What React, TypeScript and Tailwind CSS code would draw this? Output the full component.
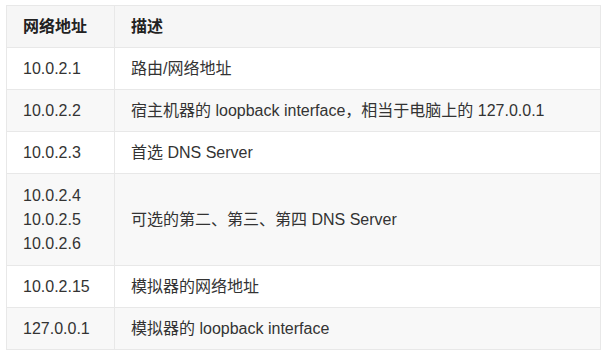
import React from "react";

const rows: { ip: string[]; desc: string }[] = [
  { ip: ["10.0.2.1"], desc: "路由/网络地址" },
  { ip: ["10.0.2.2"], desc: "宿主机器的 loopback interface，相当于电脑上的 127.0.0.1" },
  { ip: ["10.0.2.3"], desc: "首选 DNS Server" },
  { ip: ["10.0.2.4", "10.0.2.5", "10.0.2.6"], desc: "可选的第二、第三、第四 DNS Server" },
  { ip: ["10.0.2.15"], desc: "模拟器的网络地址" },
  { ip: ["127.0.0.1"], desc: "模拟器的 loopback interface" },
];

export default function App() {
  return (
    <div
      className="w-[605px] h-[355px] bg-white pt-[5px] pl-[6px] text-[16px] leading-[24px] text-[#333333]"
      style={{ fontFamily: '"Liberation Sans", Arial, "Noto Sans CJK SC", sans-serif' }}
    >
      <div className="w-[595px] grid grid-cols-[108px_486px] border-l border-t border-[#e8e8e8]">
        <div className="h-[42px] bg-[#f6f6f6] border-r border-b border-[#e8e8e8] px-4 flex items-center font-bold text-[#222]">网络地址</div>
        <div className="h-[42px] bg-[#f6f6f6] border-r border-b border-[#e8e8e8] px-4 flex items-center font-bold text-[#222]">描述</div>
        {rows.map((r, i) => {
          const bg = i % 2 === 1 ? "bg-[#f8f8f8]" : "bg-white";
          const h = r.ip.length > 1 ? "h-[92px]" : "h-[42px]";
          return (
            <React.Fragment key={i}>
              <div className={`${bg} ${h} border-r border-b border-[#e8e8e8] px-4 flex flex-col justify-center`}>
                {r.ip.map((ip) => (
                  <div key={ip}>{ip}</div>
                ))}
              </div>
              <div className={`${bg} ${h} border-r border-b border-[#e8e8e8] px-4 flex items-center`}>
                {r.desc}
              </div>
            </React.Fragment>
          );
        })}
      </div>
    </div>
  );
}
